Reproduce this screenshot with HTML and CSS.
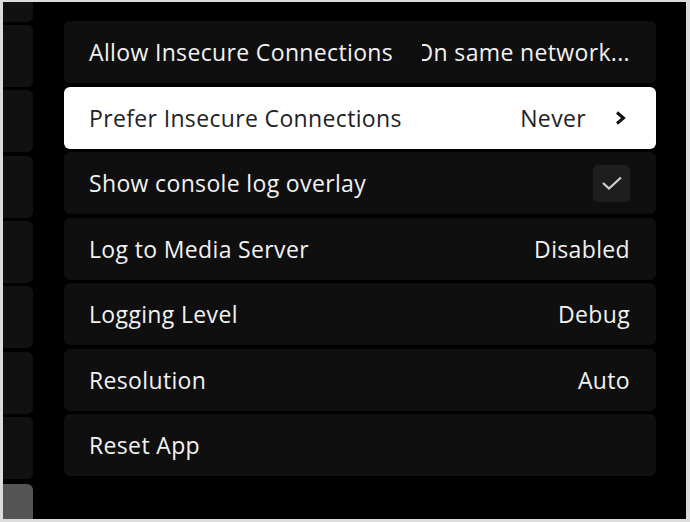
FILE: index.html
```html
<!DOCTYPE html>
<html>
<head>
<meta charset="utf-8">
<link rel="stylesheet" href="styles.css">
</head>
<body>
<div class="screen">
  <div class="rail">
    <div class="tile"></div>
    <div class="tile"></div>
    <div class="tile"></div>
    <div class="tile"></div>
    <div class="tile"></div>
    <div class="tile"></div>
    <div class="tile"></div>
    <div class="tile"></div>
    <div class="tile tile-active"></div>
  </div>
  <div class="list">
    <div class="row">
      <span class="label">Allow Insecure Connections</span>
      <span class="value clip"><span>On same network...</span></span>
    </div>
    <div class="row row-focus">
      <span class="label">Prefer Insecure Connections</span>
      <span class="value">Never</span>
      <svg class="chev" width="14" height="16" viewBox="0 0 14 16"><path d="M4 2.5 L10.5 8 L4 13.5" fill="none" stroke="#111" stroke-width="3" stroke-linejoin="miter"/></svg>
    </div>
    <div class="row">
      <span class="label">Show console log overlay</span>
      <span class="check"><svg width="22" height="16" viewBox="0 0 22 16"><path d="M2 8 L8 13.5 L20 2.5" fill="none" stroke="#d0d0d0" stroke-width="2.2"/></svg></span>
    </div>
    <div class="row">
      <span class="label">Log to Media Server</span>
      <span class="value">Disabled</span>
    </div>
    <div class="row">
      <span class="label">Logging Level</span>
      <span class="value">Debug</span>
    </div>
    <div class="row">
      <span class="label">Resolution</span>
      <span class="value">Auto</span>
    </div>
    <div class="row">
      <span class="label">Reset App</span>
    </div>
  </div>
</div>
</body>
</html>
```
FILE: styles.css
```css
html, body {
  margin: 0;
  padding: 0;
  background: #dcdcdc;
}
body {
  width: 690px;
  height: 522px;
  overflow: hidden;
}
.screen {
  margin: 2px 4px 0 3px;
  height: 517px;
  background: #000;
  display: flex;
  overflow: hidden;
  font-family: "Open Sans", "Noto Sans", sans-serif;
}
.rail {
  width: 30px;
  flex: none;
  display: flex;
  flex-direction: column;
  gap: 3.4px;
  margin-top: -42.5px;
}
.tile {
  flex: none;
  height: 62px;
  margin-left: -10px;
  width: 40px;
  background: #111;
  border-radius: 6px;
}
.tile-active {
  background: #555;
  height: 80px;
  margin-top: 1.5px;
}
.list {
  margin-left: 31px;
  width: 592px;
  padding-top: 19px;
  display: flex;
  flex-direction: column;
  gap: 3.5px;
}
.row {
  height: 62px;
  flex: none;
  box-sizing: border-box;
  background: #0f0f0f;
  border-radius: 6px;
  padding: 0 26px 0 25px;
  display: flex;
  align-items: center;
  color: #f2f2f2;
  font-size: 23px;
  letter-spacing: 0.35px;
}
.label {
  flex: 1;
  white-space: nowrap;
}
.value {
  white-space: nowrap;
}
.clip {
  width: 208px;
  overflow: hidden;
  display: flex;
  justify-content: flex-end;
}
.row-focus {
  background: #fff;
  color: #222;
}
.chev {
  margin-left: 27px;
  margin-right: 3px;
}
.check {
  width: 37px;
  height: 37px;
  border-radius: 5px;
  background: #1e1e1e;
  display: flex;
  align-items: center;
  justify-content: center;
}
```
